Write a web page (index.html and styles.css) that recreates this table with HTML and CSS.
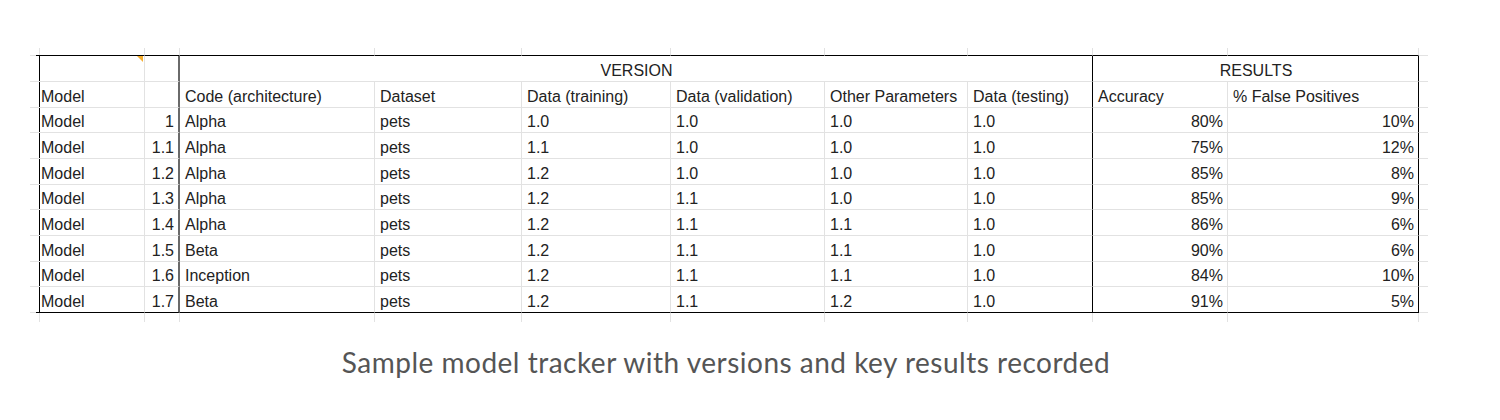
FILE: index.html
```html
<!DOCTYPE html>
<html>
<head>
<meta charset="utf-8">
<link rel="stylesheet" href="styles.css">
</head>
<body>
<figure class="figure">
  <div class="sheet">
    <!-- row 0 (above table) -->
    <div class="cell"></div>
    <div class="cell top"></div><div class="cell top"></div><div class="cell top"></div><div class="cell top"></div>
    <div class="cell top"></div><div class="cell top"></div><div class="cell top"></div><div class="cell top"></div>
    <div class="cell top"></div><div class="cell top"></div><div class="cell out-r"></div>

    <!-- row 1 group headers -->
    <div class="cell edge-l"></div>
    <div class="cell note"></div>
    <div class="cell sep"></div>
    <div class="cell ctr vb span6">VERSION</div>
    <div class="cell ctr rb span2">RESULTS</div>
    <div class="cell out-r"></div>

    <!-- row 2 column headers -->
    <div class="cell edge-l"></div>
    <div class="cell">Model</div>
    <div class="cell sep"></div>
    <div class="cell">Code (architecture)</div>
    <div class="cell">Dataset</div>
    <div class="cell">Data (training)</div>
    <div class="cell">Data (validation)</div>
    <div class="cell">Other Parameters</div>
    <div class="cell vb">Data (testing)</div>
    <div class="cell">Accuracy</div>
    <div class="cell rb">% False Positives</div>
    <div class="cell out-r"></div>

    <div class="cell edge-l"></div><div class="cell">Model</div><div class="cell sep num">1</div><div class="cell">Alpha</div><div class="cell">pets</div><div class="cell">1.0</div><div class="cell">1.0</div><div class="cell">1.0</div><div class="cell vb">1.0</div><div class="cell num">80%</div><div class="cell num rb">10%</div><div class="cell out-r"></div>

    <div class="cell edge-l"></div><div class="cell">Model</div><div class="cell sep num">1.1</div><div class="cell">Alpha</div><div class="cell">pets</div><div class="cell">1.1</div><div class="cell">1.0</div><div class="cell">1.0</div><div class="cell vb">1.0</div><div class="cell num">75%</div><div class="cell num rb">12%</div><div class="cell out-r"></div>

    <div class="cell edge-l"></div><div class="cell">Model</div><div class="cell sep num">1.2</div><div class="cell">Alpha</div><div class="cell">pets</div><div class="cell">1.2</div><div class="cell">1.0</div><div class="cell">1.0</div><div class="cell vb">1.0</div><div class="cell num">85%</div><div class="cell num rb">8%</div><div class="cell out-r"></div>

    <div class="cell edge-l"></div><div class="cell">Model</div><div class="cell sep num">1.3</div><div class="cell">Alpha</div><div class="cell">pets</div><div class="cell">1.2</div><div class="cell">1.1</div><div class="cell">1.0</div><div class="cell vb">1.0</div><div class="cell num">85%</div><div class="cell num rb">9%</div><div class="cell out-r"></div>

    <div class="cell edge-l"></div><div class="cell">Model</div><div class="cell sep num">1.4</div><div class="cell">Alpha</div><div class="cell">pets</div><div class="cell">1.2</div><div class="cell">1.1</div><div class="cell">1.1</div><div class="cell vb">1.0</div><div class="cell num">86%</div><div class="cell num rb">6%</div><div class="cell out-r"></div>

    <div class="cell edge-l"></div><div class="cell">Model</div><div class="cell sep num">1.5</div><div class="cell">Beta</div><div class="cell">pets</div><div class="cell">1.2</div><div class="cell">1.1</div><div class="cell">1.1</div><div class="cell vb">1.0</div><div class="cell num">90%</div><div class="cell num rb">6%</div><div class="cell out-r"></div>

    <div class="cell edge-l"></div><div class="cell">Model</div><div class="cell sep num">1.6</div><div class="cell">Inception</div><div class="cell">pets</div><div class="cell">1.2</div><div class="cell">1.1</div><div class="cell">1.1</div><div class="cell vb">1.0</div><div class="cell num">84%</div><div class="cell num rb">10%</div><div class="cell out-r"></div>

    <div class="cell edge-l"></div><div class="cell last">Model</div><div class="cell sep num last">1.7</div><div class="cell last">Beta</div><div class="cell last">pets</div><div class="cell last">1.2</div><div class="cell last">1.1</div><div class="cell last">1.2</div><div class="cell vb last">1.0</div><div class="cell num last">91%</div><div class="cell num rb last">5%</div><div class="cell out-r"></div>

    <!-- row 11 (below table) -->
    <div class="cell out-b"></div>
    <div class="cell out-b"></div><div class="cell out-b"></div><div class="cell out-b"></div><div class="cell out-b"></div>
    <div class="cell out-b"></div><div class="cell out-b"></div><div class="cell out-b"></div><div class="cell out-b"></div>
    <div class="cell out-b"></div><div class="cell out-b"></div><div class="cell out-b out-r"></div>
  </div>
  <figcaption class="caption">Sample model tracker with versions and key results recorded</figcaption>
</figure>
</body>
</html>
```

FILE: styles.css
```css
html, body {
  margin: 0;
  padding: 0;
  background: #fff;
}

.figure {
  margin: 0;
  padding: 48px 0 0 30px;
  width: 1398px;
}

.sheet {
  display: grid;
  grid-template-columns: 6px 109px 35px 195px 147px 149px 154px 143px 125px 135px 191px 9px;
  grid-template-rows: 8px 26px repeat(9, 25.67px) 9px;
  font-family: "Liberation Sans", Arial, sans-serif;
  font-size: 16px;
  color: #222;
}

.cell {
  box-sizing: border-box;
  position: relative;
  display: flex;
  align-items: flex-end;
  justify-content: flex-start;
  padding: 0 4px 1px 5px;
  line-height: 18px;
  white-space: nowrap;
  overflow: hidden;
  border-right: 1px solid #e2e2e2;
  border-bottom: 1px solid #e2e2e2;
}

.num { justify-content: flex-end; }
.ctr { justify-content: center; }

.span6 { grid-column: span 6; }
.span2 { grid-column: span 2; }

.top { border-bottom-color: #000; }
.edge-l { border-right-color: #000; }
.last { border-bottom-color: #000; }
.vb { border-right-color: #000; }
.rb { border-right-color: #000; }
.sep { border-right: 2px solid #6a6a6a; }

.out-r { border-right: none; }
.out-b { border-bottom: none; }

.note { overflow: visible; }
.note::after {
  content: "";
  position: absolute;
  top: 0;
  right: 1px;
  width: 0;
  height: 0;
  border-top: 6px solid #f6ae2d;
  border-left: 6px solid transparent;
}

.caption {
  margin: 24px 0 0 0;
  text-align: center;
  font-family: Lato, "Noto Sans", sans-serif;
  font-size: 28px;
  letter-spacing: 0.5px;
  line-height: 32px;
  color: #555;
  padding-right: 6px;
}
```
